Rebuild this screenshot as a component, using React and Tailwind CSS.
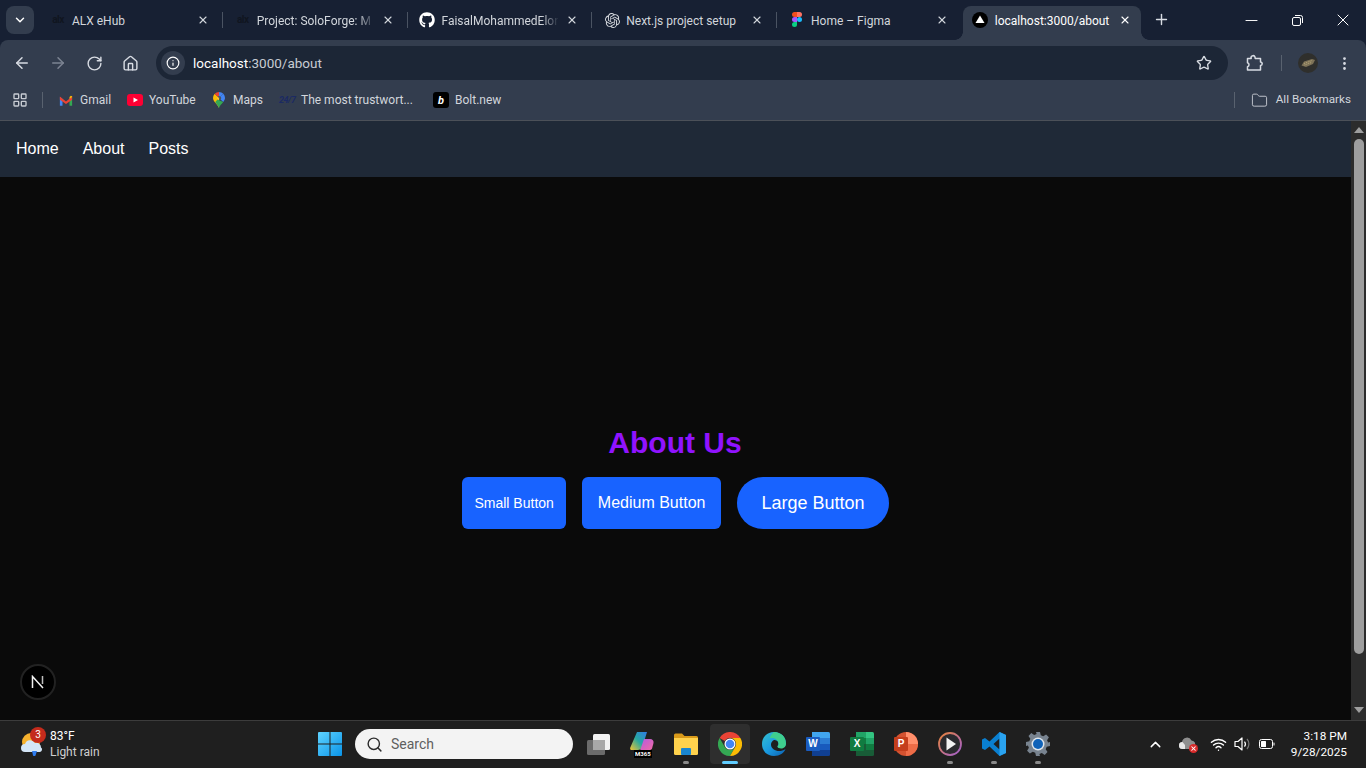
import React from 'react';
import { ArrowLeft, ArrowRight, RotateCw, Home, Info, Star, EllipsisVertical, ChevronDown, ChevronUp, X, Plus, Minus, Search, Folder, LayoutGrid, Wifi } from 'lucide-react';
import { FaGithub } from 'react-icons/fa';
import { SiOpenai } from 'react-icons/si';

const AlxIcon = () => (
  <span className="w-4 text-center text-[10px] font-bold leading-none tracking-tighter text-[#10151f]">alx</span>
);

const FigmaIcon = () => (
  <svg width="16" height="16" viewBox="0 0 16 16">
    <path d="M8 0h-2.500a2.500 2.500 0 0 0 0 5H8z" fill="#f24e1e" />
    <path d="M8 0h2.500a2.500 2.500 0 0 1 0 5H8z" fill="#ff7262" />
    <path d="M8 5H5.500a2.500 2.500 0 0 0 0 5H8z" fill="#a259ff" />
    <circle cx="10.500" cy="7.500" r="2.500" fill="#1abcfe" />
    <path d="M8 10H5.500a2.500 2.500 0 1 0 2.500 2.500z" fill="#0acf83" />
  </svg>
);

const NextFavicon = () => (
  <svg width="16" height="16" viewBox="0 0 16 16">
    <circle cx="8" cy="8" r="8" fill="#000" />
    <path d="M8 3.500 12.500 11h-9z" fill="#fff" />
  </svg>
);

const tabs = [
  { title: 'ALX eHub', icon: <AlxIcon /> },
  { title: 'Project: SoloForge: M', icon: <AlxIcon />, fade: true },
  { title: 'FaisalMohammedElor', icon: <FaGithub className="text-white" size={16} />, fade: true },
  { title: 'Next.js project setup', icon: <SiOpenai className="text-[#d8dbe0]" size={15} /> },
  { title: 'Home – Figma', icon: <FigmaIcon />, last: true },
];

const GmailIcon = () => (
  <svg width="14" height="11" viewBox="0 0 16 12">
    <path d="M1 12V2l3 2.300V12z" fill="#4285f4" />
    <path d="M12 12V4.300L15 2v10z" fill="#34a853" />
    <path d="M1 1.500 8 7l7-5.500V5L8 10 1 5z" fill="#ea4335" />
    <path d="M12 4.300 15 2V1l-1.500-.5L12 2z" fill="#fbbc04" />
  </svg>
);

const YoutubeIcon = () => (
  <svg width="16" height="12" viewBox="0 0 16 12">
    <rect width="16" height="12" rx="3" fill="#ff0033" />
    <path d="M6.500 3.500 11 6l-4.500 2.500z" fill="#fff" />
  </svg>
);

const MapsIcon = () => (
  <svg width="12" height="16" viewBox="0 0 12 16">
    <path d="M6 16C4.500 12 0 9.500 0 6a6 6 0 0 1 1.700-4.200L6 6z" fill="#fbbc04" />
    <path d="M1.700 1.800A6 6 0 0 1 6 0v4a2 2 0 0 0-1.500.6z" fill="#ea4335" />
    <path d="M6 0a6 6 0 0 1 4.300 1.800L7.500 4.600A2 2 0 0 0 6 4z" fill="#4285f4" />
    <path d="M10.300 1.800A6 6 0 0 1 12 6c0 1.500-.8 2.800-1.800 4L7.500 7.400a2 2 0 0 0 0-2.800z" fill="#4285f4" />
    <path d="M6 16c.8-2.300 2.700-4.100 4.200-6L4.500 7.400 2.200 10C3.600 11.800 5.300 14 6 16z" fill="#34a853" />
    <circle cx="6" cy="6" r="2" fill="#fff" fillOpacity="0.15" />
  </svg>
);

const BoltIcon = () => (
  <span className="flex h-4 w-4 items-center justify-center rounded-[3px] bg-black text-[11px] font-bold italic leading-none text-white">b</span>
);

const bookmarks = [
  { label: 'Gmail', icon: <GmailIcon />, className: 'ml-[16px] w-[52px]', gap: 'gap-[7px]' },
  { label: 'YouTube', icon: <YoutubeIcon />, className: 'ml-[16px] w-[68px]', gap: 'gap-[6px]' },
  { label: 'Maps', icon: <MapsIcon />, className: 'ml-[18px] w-[49px]', gap: 'gap-[8px]' },
  { label: 'The most trustwort...', icon: <span className="block w-4 text-[9px] font-bold italic leading-none tracking-tighter text-[#1b2a63]">24/7</span>, className: 'ml-[17px] w-[132px]', gap: 'gap-[6px]' },
  { label: 'Bolt.new', icon: <BoltIcon />, className: 'ml-[22px] w-[67px]', gap: 'gap-[6px]' },
];

const ExtensionIcon = () => (
  <svg width="18" height="18" viewBox="0 0 18 18" fill="none" stroke="#d8dce3" strokeWidth="1.500" strokeLinejoin="round">
    <path d="M1.500 4.500h3.700a2 2 0 0 1 3.800-1.500l.2 1.500h5.300v3.600a1.700 1.700 0 0 1 0 3.400v4.500H1.500v-3.300a2 2 0 0 0 1.500-2 2 2 0 0 0-1.500-2z" />
  </svg>
);

const AvatarIcon = () => (
  <svg width="20" height="20" viewBox="0 0 20 20">
    <circle cx="10" cy="10" r="10" fill="#2f2f2c" />
    <path d="M3.500 12.500 6 8.500l8-2.500 3 1-2 4-7 3z" fill="#7d7257" />
    <path d="M6 10.500l8-3M6.500 12l7-2.500" stroke="#c4b27f" strokeWidth="0.800" strokeDasharray="1 1" />
  </svg>
);

const RestoreIcon = () => (
  <svg width="11" height="11" viewBox="0 0 11 11" fill="none" stroke="#fff" strokeWidth="1">
    <rect x="0.500" y="2.500" width="8" height="8" rx="1.500" />
    <path d="M3 .500h5.500a2 2 0 0 1 2 2V8" />
  </svg>
);

const WindowsLogo = () => (
  <svg width="24" height="24" viewBox="0 0 24 24">
    <defs>
      <linearGradient id="win" x1="0" y1="0" x2="1" y2="1">
        <stop offset="0" stopColor="#5fd3ff" />
        <stop offset="1" stopColor="#0a94e8" />
      </linearGradient>
    </defs>
    <path d="M0 1a1 1 0 0 1 1-1h10.500v11.500H0zM12.500 0H23a1 1 0 0 1 1 1v10.500H12.500zM0 12.500h11.500V24H1a1 1 0 0 1-1-1zM12.500 12.500H24V23a1 1 0 0 1-1 1H12.500z" fill="url(#win)" />
  </svg>
);

const TaskViewIcon = () => (
  <svg width="24" height="24" viewBox="0 0 24 24">
    <rect x="1" y="8" width="18" height="15" rx="1.500" fill="#6b6b6b" />
    <rect x="7" y="2" width="17" height="16" rx="1.500" fill="#f2f2f2" />
    <rect x="7" y="8" width="12" height="10" fill="#a8a8a8" />
  </svg>
);

const M365Icon = () => (
  <div className="relative h-6 w-6">
    <svg width="24" height="20" viewBox="0 0 24 20">
      <defs>
        <linearGradient id="m1" x1="0" y1="1" x2="1" y2="0">
          <stop offset="0" stopColor="#f4c430" />
          <stop offset="0.500" stopColor="#27a8a0" />
          <stop offset="1" stopColor="#2f7be8" />
        </linearGradient>
        <linearGradient id="m2" x1="0" y1="0" x2="1" y2="1">
          <stop offset="0" stopColor="#b45ae0" />
          <stop offset="1" stopColor="#f26aa5" />
        </linearGradient>
      </defs>
      <path d="M7 0h10l-4 13c-.6 2-2 5-5 5H2c-1.500 0-2.200-1-1.700-2.500z" fill="url(#m1)" />
      <path d="M14 7h6c2.500 0 4 2 3.500 4l-1.300 5c-.4 1.500-1.500 2-3 2h-9z" fill="url(#m2)" />
    </svg>
    <span className="absolute bottom-[-2px] left-[4px] bg-black px-[1px] text-[6px] font-bold leading-[8px] text-white">M365</span>
  </div>
);

const ExplorerIcon = () => (
  <svg width="24" height="22" viewBox="0 0 24 22">
    <path d="M0 2a1.500 1.500 0 0 1 1.500-1.500h6.500l2.500 2.500H22.500A1.500 1.500 0 0 1 24 4.500V8H0z" fill="#d99a1a" />
    <path d="M0 5h24v15.500a1.500 1.500 0 0 1-1.500 1.500h-21A1.500 1.500 0 0 1 0 20.500z" fill="#ffd24d" />
    <rect x="7" y="15" width="10" height="7" rx="1" fill="#1a86d0" />
  </svg>
);

const ChromeIcon = () => (
  <svg width="24" height="24" viewBox="0 0 24 24">
    <path d="M1.600 6A12 12 0 0 1 22.400 6H12A6 6 0 0 0 6.800 9z" fill="#ea4335" />
    <path d="M1.600 6 6.800 15A6 6 0 0 0 17.200 15L12 24A12 12 0 0 1 1.600 6z" fill="#34a853" />
    <path d="M22.400 6A12 12 0 0 1 12 24L17.200 15A6 6 0 0 0 12 6z" fill="#fbbc04" />
    <circle cx="12" cy="12" r="5.500" fill="#fff" />
    <circle cx="12" cy="12" r="4.300" fill="#4285f4" />
  </svg>
);

const EdgeIcon = () => (
  <svg width="24" height="24" viewBox="0 0 24 24">
    <defs>
      <linearGradient id="edge" x1="0" y1="0" x2="1" y2="1">
        <stop offset="0" stopColor="#35c1d0" />
        <stop offset="0.500" stopColor="#1a9be0" />
        <stop offset="1" stopColor="#0c5fb0" />
      </linearGradient>
    </defs>
    <path d="M12 0C5 0 0 5 0 12s5 12 12 12c6 0 10-3 11.500-7-2 1.500-4 2-6.500 2-4 0-8-2.500-8-6.500 0-2 1.200-3.500 3-4.500 2 0 4.500 1 4.500 3.500 0 1.500-1 2-1 2.800 0 1.200 2 1.700 3.500 1.700 3.500 0 5-2.500 5-5C24 5 19 0 12 0z" fill="url(#edge)" />
    <path d="M12 0c7 0 12 5 12 11.500 0 2.500-1.500 5-5 5-1.500 0-3.500-.5-3.500-1.700 0-.8 1-1.300 1-2.800C16.500 8 12 5 7.500 6.500 9 3 10 1.500 12 0z" fill="#3fcf8e" />
  </svg>
);

// Office tiles share one shape: coloured sheet plus a small letter square
const OfficeIcon = ({ letter, sheet, tile }) => (
  <div className="relative h-6 w-6">
    {sheet}
    <span className={`absolute left-0 top-[5px] flex h-[14px] w-[14px] items-center justify-center rounded-[1px] text-[10px] font-bold leading-none text-white ${tile}`} style={{ fontFamily: 'Liberation Sans' }}>
      {letter}
    </span>
  </div>
);

const WordSheet = (
  <svg width="24" height="24" viewBox="0 0 24 24">
    <path d="M6 0h16.500A1.500 1.500 0 0 1 24 1.500V6H6z" fill="#41a5ee" />
    <rect x="6" y="6" width="18" height="6" fill="#2b7cd3" />
    <rect x="6" y="12" width="18" height="6" fill="#185abd" />
    <path d="M6 18h18v4.500a1.500 1.500 0 0 1-1.500 1.500H6z" fill="#103f91" />
  </svg>
);

const ExcelSheet = (
  <svg width="24" height="24" viewBox="0 0 24 24">
    <path d="M6 0h10v6H6z" fill="#21a366" />
    <path d="M16 0h6.500A1.500 1.500 0 0 1 24 1.500V6h-8z" fill="#33c481" />
    <rect x="6" y="6" width="10" height="6" fill="#107c41" />
    <rect x="16" y="6" width="8" height="6" fill="#21a366" />
    <rect x="6" y="12" width="10" height="6" fill="#185c37" />
    <rect x="16" y="12" width="8" height="6" fill="#107c41" />
    <path d="M6 18h18v4.500a1.500 1.500 0 0 1-1.500 1.500H6z" fill="#185c37" />
  </svg>
);

const PowerPointSheet = (
  <svg width="24" height="24" viewBox="0 0 24 24">
    <circle cx="12" cy="12" r="12" fill="#d35230" />
    <path d="M12 0a12 12 0 0 1 12 12H12z" fill="#ff8f6b" />
    <path d="M24 12a12 12 0 0 1-12 12V12z" fill="#ed6c47" />
  </svg>
);

const PlayerIcon = () => (
  <svg width="24" height="24" viewBox="0 0 24 24">
    <defs>
      <linearGradient id="ring" x1="0" y1="0" x2="1" y2="1">
        <stop offset="0" stopColor="#e8833a" />
        <stop offset="1" stopColor="#a05fd0" />
      </linearGradient>
    </defs>
    <circle cx="12" cy="12" r="11" fill="#2a2a2e" stroke="url(#ring)" strokeWidth="1.800" />
    <path d="M8.500 5.500 18 12l-9.500 6.500z" fill="#f2f2f2" />
  </svg>
);

const VscodeIcon = () => (
  <svg width="24" height="24" viewBox="0 0 24 24">
    <path d="M17.500 0 24 3v18l-6.500 3-10-9.500L3 18l-3-1.500v-9L3 6l4.500 3.500zM17.500 6.500 11.500 12l6 5.500z" fill="#0a7fd0" />
    <path d="M17.500 0 24 3v18l-6.500 3z" fill="#2aa3f0" />
  </svg>
);

const SettingsIcon = () => (
  <svg width="24" height="24" viewBox="0 0 24 24">
    <path d="M10 0h4l.8 3.300 2.400 1 2.900-1.800 2.800 2.800-1.800 2.900 1 2.400L24 10v4l-3.300.8-1 2.400 1.800 2.900-2.800 2.800-2.900-1.800-2.400 1L14 24h-4l-.8-3.300-2.400-1-2.900 1.800-2.800-2.800 1.800-2.900-1-2.400L0 14v-4l3.300-.8 1-2.400-1.800-2.900 2.800-2.800 2.900 1.800 2.400-1z" fill="#78838f" />
    <circle cx="12" cy="12" r="6.500" fill="#dfe6ec" />
    <circle cx="12" cy="12" r="5" fill="#0f62b8" />
  </svg>
);

const taskApps = [
  { icon: <TaskViewIcon /> },
  { icon: <M365Icon /> },
  { icon: <ExplorerIcon />, dot: true },
  { icon: <ChromeIcon />, active: true },
  { icon: <EdgeIcon /> },
  { icon: <OfficeIcon letter="W" sheet={WordSheet} tile="bg-[#1a5cc0]" /> },
  { icon: <OfficeIcon letter="X" sheet={ExcelSheet} tile="bg-[#107c41]" /> },
  { icon: <OfficeIcon letter="P" sheet={PowerPointSheet} tile="bg-[#c43e1c]" /> },
  { icon: <PlayerIcon />, dot: true },
  { icon: <VscodeIcon />, dot: true },
  { icon: <SettingsIcon />, dot: true },
];

const WeatherIcon = () => (
  <svg width="24" height="24" viewBox="0 0 24 24">
    <circle cx="11" cy="10" r="9" fill="#f5b12e" />
    <path d="M5 20a4 4 0 0 1 0-8 5.500 5.500 0 0 1 10-1 4.500 4.500 0 0 1 6 4.500 2.500 2.500 0 0 1-1 4.500z" fill="#d4e6f7" />
    <path d="M12 19h5l-1.500 4.500a1.500 1.500 0 0 1-2.500 0z" fill="#2f7df0" />
  </svg>
);

const OneDriveIcon = () => (
  <div className="relative h-4 w-5">
    <svg width="16" height="12" viewBox="0 0 16 12" className="absolute left-0 top-[1px]">
      <path d="M3.500 12a3.500 3.500 0 0 1-.5-7A5 5 0 0 1 12.500 3.500 4.500 4.500 0 0 1 14 12z" fill="#8e8e8e" />
      <path d="M3.500 12a3.500 3.500 0 0 1 0-7L6 8v4z" fill="#e6e6e6" />
    </svg>
    <span className="absolute bottom-[-1px] right-[1px] flex h-[9px] w-[9px] items-center justify-center rounded-full bg-[#d92b2b]">
      <X size={7} strokeWidth={3.500} className="text-white" />
    </span>
  </div>
);

const SpeakerIcon = () => (
  <svg width="18" height="16" viewBox="0 0 18 16" fill="none" strokeWidth="1.200">
    <path d="M1 5.500h3L8 2v12l-4-3.500H1z" stroke="#fff" strokeLinejoin="round" />
    <path d="M10.500 5.500a4 4 0 0 1 0 5" stroke="#fff" />
    <path d="M13 3a7.500 7.500 0 0 1 0 10" stroke="#777" />
  </svg>
);

const BatteryIcon = () => (
  <svg width="16" height="12" viewBox="0 0 16 12" fill="none">
    <rect x="0.500" y="1.500" width="13" height="9" rx="2" stroke="#fff" />
    <rect x="2" y="3" width="5" height="6" rx="0.500" fill="#fff" />
    <path d="M14.500 4.500h.5a.5.5 0 0 1 .5.5v2a.5.5 0 0 1-.5.5h-.5z" fill="#fff" />
  </svg>
);

const ChromeTabs = () => (
  <div className="flex h-10 items-end bg-[#172033] text-xs text-[#d2d6dc]" style={{ fontFamily: 'Roboto, sans-serif' }}>
    <div className="flex h-10 w-[38px] items-center pl-[6px]">
      <button className="flex h-7 w-7 items-center justify-center rounded-lg bg-[#333d4e]">
        <ChevronDown size={14} strokeWidth={2.500} className="text-white" />
      </button>
    </div>
    {tabs.map((tab) => (
      <div key={tab.title} className="flex h-10 w-[184.75px] items-center">
        <div className="flex w-[34px] justify-end pr-[6px]">{tab.icon}</div>
        <span className={`w-[118px] whitespace-nowrap pt-px ${tab.fade ? '[mask-image:linear-gradient(90deg,#000_85%,transparent)]' : ''}`}>
          {tab.title}
        </span>
        <span className="ml-[7px] flex w-[12px] justify-center">
          <X size={14} strokeWidth={2.200} className="text-[#d2d6dc]" />
        </span>
        {!tab.last && <span className="ml-[13px] h-4 w-px bg-[#4a5362]" />}
      </div>
    ))}
    {/* active tab sits on the toolbar, corners flare out */}
    <div className="relative ml-[1px] flex h-[34px] w-[178px] items-center rounded-t-lg bg-[#333d4e] pb-[6px] pl-[9px] text-white">
      <span className="absolute bottom-0 left-[-8px] h-2 w-2 bg-[radial-gradient(circle_at_0_0,#172033_7.500px,#333d4e_8px)]" />
      <span className="absolute bottom-0 right-[-8px] h-2 w-2 bg-[radial-gradient(circle_at_100%_0,#172033_7.500px,#333d4e_8px)]" />
      <NextFavicon />
      <span className="ml-[7px] w-[118px] whitespace-nowrap pt-px">localhost:3000/about</span>
      <span className="ml-[6px] flex w-[12px] justify-center">
        <X size={14} strokeWidth={2.200} />
      </span>
    </div>
    <div className="flex h-10 items-center pb-px pl-[12px]">
      <Plus size={17} strokeWidth={2} className="text-[#d8dce3]" />
    </div>
    <div className="ml-auto flex h-10 items-center text-white">
      <span className="flex w-[46px] justify-center"><Minus size={19} strokeWidth={1.200} /></span>
      <span className="flex w-[46px] justify-center"><RestoreIcon /></span>
      <span className="flex w-[46px] justify-center"><X size={20} strokeWidth={1.200} /></span>
    </div>
  </div>
);

const Toolbar = () => (
  <div className="bg-[#172033]">
    <div className="flex h-10 rounded-t-lg bg-[#333d4e] pt-[6px]">
      <div className="flex h-[34px] w-[156px] items-center pl-[4px] text-[#d8dce3]">
        <span className="flex w-9 justify-center"><ArrowLeft size={18} /></span>
        <span className="flex w-9 justify-center text-[#7c8492]"><ArrowRight size={18} /></span>
        <span className="flex w-9 justify-center"><RotateCw size={17} /></span>
        <span className="flex w-9 justify-center"><Home size={17} /></span>
      </div>
      <div className="flex h-[34px] w-[1072px] items-center rounded-full bg-[#1c2636] pl-[5px] pr-4 text-[13.500px] text-white" style={{ fontFamily: 'Roboto, sans-serif' }}>
        <span className="flex h-6 w-6 items-center justify-center rounded-full bg-[#333d4e]">
          <Info size={14} className="text-white" />
        </span>
        <span className="ml-2">localhost<span className="text-[#c8ccd3]">:3000/about</span></span>
        <Star size={16} className="ml-auto text-[#d8dce3]" />
      </div>
      <div className="flex h-[34px] flex-1 items-center">
        <span className="ml-[18px] flex w-[18px]"><ExtensionIcon /></span>
        <span className="ml-[17px] h-4 w-px bg-[#59626f]" />
        <span className="ml-4 flex h-5 w-5"><AvatarIcon /></span>
        <EllipsisVertical size={17} className="ml-[18px] text-[#d8dce3]" />
      </div>
    </div>
  </div>
);

const BookmarksBar = () => (
  <div className="flex h-[41px] items-center border-b border-[#4b5058] bg-[#333d4e] text-xs text-[#d2d6dc]" style={{ fontFamily: 'Roboto, sans-serif' }}>
    <LayoutGrid size={16} className="ml-[12px] text-[#c8ccd3]" />
    <span className="ml-[14px] h-4 w-px bg-[#59626f]" />
    {bookmarks.map((b) => (
      <div key={b.label} className={`flex items-center ${b.gap} ${b.className}`}>
        <span className="shrink-0">{b.icon}</span>
        <span className="whitespace-nowrap">{b.label}</span>
      </div>
    ))}
    <span className="ml-auto h-4 w-px bg-[#59626f]" />
    <Folder size={17} strokeWidth={1.300} className="ml-[16px] text-[#c8ccd3]" />
    <span className="ml-2 mr-[15px] whitespace-nowrap text-[11.700px]">All Bookmarks</span>
  </div>
);

const Scrollbar = () => (
  <div className="flex w-[15px] flex-col items-center bg-[#2c2c2c]">
    <span className="mt-[6px] h-0 w-0 border-x-[5px] border-b-[6px] border-x-transparent border-b-[#9e9e9e]" />
    <span className="mt-[6px] h-[515px] w-[10px] rounded-full bg-[#9e9e9e]" />
    <span className="mt-[53px] h-0 w-0 border-x-[5px] border-t-[6px] border-x-transparent border-t-[#9e9e9e]" />
  </div>
);

const SiteButton = ({ children, className }) => (
  <button className={`h-[52px] bg-[#1863ff] text-white ${className}`}>{children}</button>
);

const Page = () => (
  <div className="relative flex h-[599px] bg-[#0a0a0a]" style={{ fontFamily: '"Liberation Sans", Arial, sans-serif' }}>
    <div className="flex flex-1 flex-col">
      <nav className="flex h-14 items-center gap-6 bg-[#1f2937] px-4 text-white">
        <a>Home</a>
        <a>About</a>
        <a>Posts</a>
      </nav>
      <main className="flex flex-1 flex-col items-center pt-[248px]">
        <h1 className="pr-[1px] text-3xl font-bold text-[#9013fe]">About Us</h1>
        <div className="mt-4 flex gap-4">
          <SiteButton className="rounded-md px-3 text-sm">Small Button</SiteButton>
          <SiteButton className="rounded-md px-4 text-base">Medium Button</SiteButton>
          <SiteButton className="rounded-full px-6 text-lg">Large Button</SiteButton>
        </div>
      </main>
    </div>
    <Scrollbar />
    {/* next.js dev indicator floats over the page */}
    <div className="absolute bottom-[20px] left-[20px] flex h-9 w-9 items-center justify-center rounded-full border-2 border-[#222] bg-black">
      <svg width="14" height="14" viewBox="0 0 14 14" fill="none">
        <path d="M1.500 13V1.500L12 13" stroke="#f2f2f2" strokeWidth="1.500" />
        <path d="M11.500 1v8" stroke="#bdbdbd" strokeWidth="1.500" />
      </svg>
    </div>
  </div>
);

const Taskbar = () => (
  <div className="flex h-12 items-center border-t border-[#3c3c3c] bg-[#1f1f1f] pb-px text-white" style={{ fontFamily: 'Roboto, sans-serif' }}>
    <div className="flex w-[308px] items-center pl-[20px]">
      <div className="relative h-6 w-6">
        <WeatherIcon />
        <span className="absolute left-[10px] top-[-5px] flex h-4 w-4 items-center justify-center rounded-full bg-[#c42b1c] text-[10px] leading-none">3</span>
      </div>
      <div className="ml-[6px] text-xs leading-[16px]">
        <div>83°F</div>
        <div className="text-[#cfcfcf]">Light rain</div>
      </div>
    </div>
    <div className="flex w-[44px] justify-center"><WindowsLogo /></div>
    <div className="ml-[3px] flex h-[30px] w-[218px] items-center rounded-full bg-[#f3f3f3] pl-[11px] text-sm text-[#5f5f5f]">
      <Search size={17} strokeWidth={2} className="text-[#2b2b2b]" />
      <span className="ml-[8px]">Search</span>
    </div>
    <div className="ml-[3px] flex">
      {taskApps.map((app, i) => (
        <div key={i} className="relative flex h-10 w-[44px] items-center justify-center">
          {app.active && <span className="absolute h-10 w-10 rounded bg-[#2e2e2e]" />}
          <span className="relative">{app.icon}</span>
          {app.dot && <span className="absolute bottom-0 h-[3px] w-[6px] rounded-full bg-[#8a8a8a]" />}
          {app.active && <span className="absolute bottom-0 h-[3px] w-4 rounded-full bg-[#60cdff]" />}
        </div>
      ))}
    </div>
    <div className="ml-auto flex items-center pr-[19px]">
      <ChevronUp size={17} strokeWidth={2} />
      <span className="ml-[15px]"><OneDriveIcon /></span>
      <Wifi size={17} strokeWidth={2} className="ml-[11px]" />
      <span className="ml-[7px]"><SpeakerIcon /></span>
      <span className="ml-[7px]"><BatteryIcon /></span>
      <div className="ml-[16px] text-right text-[11.800px] leading-[16px]">
        <div>3:18 PM</div>
        <div>9/28/2025</div>
      </div>
    </div>
  </div>
);

export default function App() {
  return (
    <div className="flex h-[768px] w-[1366px] flex-col overflow-hidden" style={{ fontFamily: '"Noto Sans", sans-serif' }}>
      <ChromeTabs />
      <Toolbar />
      <BookmarksBar />
      <Page />
      <Taskbar />
    </div>
  );
}
